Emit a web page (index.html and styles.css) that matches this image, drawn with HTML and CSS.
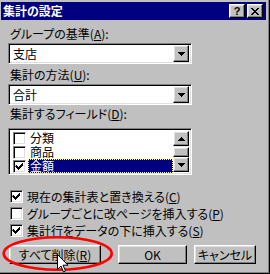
FILE: index.html
```html
<!DOCTYPE html>
<html lang="ja">
<head>
<meta charset="UTF-8">
<title>集計の設定</title>
<link rel="stylesheet" href="styles.css">
</head>
<body>
<div class="window">
  <div class="titlebar">
    <span class="title">集計の設定</span>
    <div class="caption-buttons">
      <span class="cap-btn help">?</span>
      <span class="cap-btn close">
        <svg width="8" height="7" viewBox="0 0 8 7"><path d="M0 0h2v1h1v1h2v-1h1v-1h2v1h-1v1h-1v1h-1v1h1v1h1v1h1v1h-2v-1h-1v-1h-2v1h-1v1h-2v-1h1v-1h1v-1h1v-1h-1v-1h-1v-1h-1z" fill="#000"/></svg>
      </span>
    </div>
  </div>

  <div class="content">
    <div class="field-label">グループの基準(<u>A</u>):</div>
    <div class="combo">
      <span class="combo-text">支店</span>
      <span class="drop-btn"><svg width="7" height="4" viewBox="0 0 7 4"><path d="M0 0h7v1h-1v1h-1v1h-1v1h-1v-1h-1v-1h-1v-1h-1z" fill="#000"/></svg></span>
    </div>

    <div class="field-label second">集計の方法(<u>U</u>):</div>
    <div class="combo">
      <span class="combo-text">合計</span>
      <span class="drop-btn"><svg width="7" height="4" viewBox="0 0 7 4"><path d="M0 0h7v1h-1v1h-1v1h-1v1h-1v-1h-1v-1h-1v-1h-1z" fill="#000"/></svg></span>
    </div>

    <div class="field-label third">集計するフィールド(<u>D</u>):</div>
    <div class="listbox">
      <div class="list-items">
        <div class="list-item"><span class="check"></span><span class="item-text">分類</span></div>
        <div class="list-item"><span class="check"></span><span class="item-text">商品</span></div>
        <div class="list-item"><span class="check checked"><svg width="9" height="9" viewBox="0 0 9 9"><path d="M1 3h1v1h1v1h1v-1h1v-1h1v-1h1v-1h1v3h-1v1h-1v1h-1v1h-1v1h-1v-1h-1v-1h-1v-1h-1z" fill="#000"/></svg></span><span class="item-text selected">金額</span></div>
      </div>
      <div class="vscroll">
        <span class="scroll-btn"><svg width="7" height="4" viewBox="0 0 7 4"><path d="M3 0h1v1h1v1h1v1h1v1h-7v-1h1v-1h1v-1h1z" fill="#000"/></svg></span>
        <span class="scroll-track"><span class="thumb"></span></span>
        <span class="scroll-btn"><svg width="7" height="4" viewBox="0 0 7 4"><path d="M0 0h7v1h-1v1h-1v1h-1v1h-1v-1h-1v-1h-1v-1h-1z" fill="#000"/></svg></span>
      </div>
    </div>

    <div class="options">
      <div class="option"><span class="check checked"><svg width="9" height="9" viewBox="0 0 9 9"><path d="M1 3h1v1h1v1h1v-1h1v-1h1v-1h1v-1h1v3h-1v1h-1v1h-1v1h-1v1h-1v-1h-1v-1h-1v-1h-1z" fill="#000"/></svg></span><span class="option-text">現在の集計表と置き換える(<u>C</u>)</span></div>
      <div class="option"><span class="check"></span><span class="option-text">グループごとに改ページを挿入する(<u>P</u>)</span></div>
      <div class="option"><span class="check checked"><svg width="9" height="9" viewBox="0 0 9 9"><path d="M1 3h1v1h1v1h1v-1h1v-1h1v-1h1v-1h1v3h-1v1h-1v1h-1v1h-1v1h-1v-1h-1v-1h-1v-1h-1z" fill="#000"/></svg></span><span class="option-text">集計行をデータの下に挿入する(<u>S</u>)</span></div>
    </div>

    <div class="buttons">
      <span class="btn remove">すべて削除(<u>R</u>)</span>
      <span class="btn ok">OK</span>
      <span class="btn cancel">キャンセル</span>
    </div>
  </div>
</div>

<!-- annotation drawn over the dialog -->
<svg class="mark" width="116" height="40" viewBox="0 0 116 40">
  <ellipse cx="57.7" cy="19.5" rx="54" ry="16.3" fill="none" stroke="#ff0000" stroke-width="2.6"/>
</svg>
<svg class="cursor" width="12" height="19" viewBox="0 0 12 19">
  <path d="M0.5 0.5 L0.5 15.5 L4 12 L6.5 18 L8.5 17 L6 11.2 L11 11.2 Z" fill="#fff" stroke="#000" stroke-width="1"/>
</svg>
</body>
</html>
```

FILE: styles.css
```css
* {
    box-sizing: border-box;
}

body {
    margin: 0;
    position: relative;
    width: 270px;
    height: 274px;
    overflow: hidden;
    background: #c0c0c0;
    color: #000;
    font-family: "Noto Sans CJK JP", "Noto Sans", sans-serif;
    font-size: 12px;
    font-feature-settings: "palt";
}

u {
    text-decoration-thickness: 1px;
    text-underline-offset: 1px;
}

.window {
    width: 273px;
    height: 276px;
    margin: -2px 0 0 -3px;
    padding: 3px;
    background: #c0c0c0;
    border: 1px solid;
    border-color: #dfdfdf #000 #000 #dfdfdf;
    box-shadow: inset 1px 1px #fff, inset -1px -1px #808080;
}

.titlebar {
    height: 18px;
    background: #000080;
    display: flex;
    align-items: center;
    padding: 0 3px 0 2px;
}

.title {
    color: #fff;
    font-weight: bold;
    font-size: 12px;
    line-height: 18px;
}

.caption-buttons {
    margin-left: auto;
    display: flex;
    gap: 2px;
}

.cap-btn,
.drop-btn,
.scroll-btn,
.thumb,
.btn {
    background: #c0c0c0;
    border: 1px solid;
    border-color: #fff #000 #000 #fff;
    box-shadow: inset -1px -1px #808080, inset 1px 1px #dfdfdf;
    display: flex;
    align-items: center;
    justify-content: center;
}

.cap-btn {
    width: 16px;
    height: 14px;
}

.help {
    font-family: "Liberation Sans", Arial, sans-serif;
    font-weight: bold;
    font-size: 11px;
    line-height: 12px;
}

.content {
    display: flex;
    flex-direction: column;
    align-items: flex-start;
    padding-left: 7px;
}

.field-label {
    line-height: 13px;
    margin-top: 7px;
    padding-left: 2px;
}

.field-label.second {
    margin-top: 4px;
}

.field-label.third {
    margin-top: 2px;
}

.combo,
.listbox {
    width: 184px;
    background: #fff;
    border: 1px solid;
    border-color: #808080 #fff #fff #808080;
    box-shadow: inset 1px 1px #000, inset -1px -1px #dfdfdf;
    padding: 2px;
    display: flex;
}

.combo {
    height: 21px;
    margin-top: 3px;
    align-items: center;
}

.combo-text {
    flex: 1;
    padding-left: 2px;
    line-height: 17px;
}

.drop-btn {
    width: 16px;
    height: 17px;
}

.listbox {
    height: 47px;
    margin-top: 8px;
}

.list-items {
    flex: 1;
    display: flex;
    flex-direction: column;
}

.list-item {
    height: 14px;
    display: flex;
    align-items: center;
    line-height: 14px;
}

.list-item:last-child {
    height: 15px;
}

.check {
    width: 13px;
    height: 13px;
    flex: none;
    background: #fff;
    border: 1px solid;
    border-color: #808080 #fff #fff #808080;
    box-shadow: inset 1px 1px #000, inset -1px -1px #dfdfdf;
    display: flex;
    align-items: center;
    justify-content: center;
}

.list-item .check {
    margin-left: 2px;
}

.item-text {
    flex: 1;
    height: 100%;
    margin-left: 2px;
    padding-left: 2px;
    line-height: 14px;
}

.item-text.selected {
    background: #000080;
    color: #fff;
    outline: 1px dotted #ffff80;
    outline-offset: -1px;
}

.vscroll {
    width: 16px;
    display: flex;
    flex-direction: column;
}

.scroll-btn {
    height: 15px;
}

.scroll-track {
    flex: 1;
    background: #e4e4e4;
    display: flex;
    flex-direction: column;
    justify-content: flex-end;
}

.thumb {
    height: 10px;
}

.options {
    margin-top: 13px;
    padding-left: 2px;
}

.option {
    height: 17px;
    display: flex;
    align-items: center;
}

.option-text {
    margin-left: 4px;
}

.buttons {
    display: flex;
    margin-top: 6px;
    padding-left: 1px;
}

.btn {
    height: 19px;
}

.remove {
    width: 92px;
}

.ok {
    width: 69px;
    margin-left: 17px;
}

.cancel {
    width: 62px;
    margin-left: 7px;
}

.mark {
    position: absolute;
    left: 0;
    top: 234px;
}

.cursor {
    position: absolute;
    left: 57px;
    top: 254px;
}
```
